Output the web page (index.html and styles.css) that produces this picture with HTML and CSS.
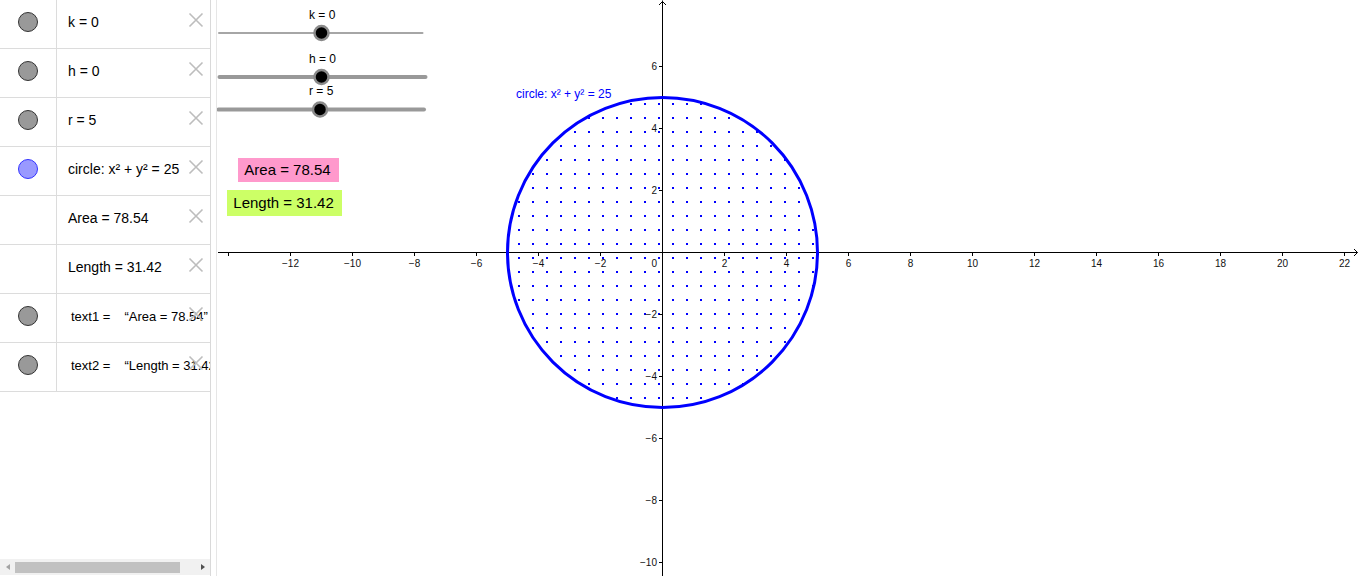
FILE: index.html
```html
<!DOCTYPE html>
<html>
<head>
<meta charset="utf-8">
<link rel="stylesheet" href="styles.css">
</head>
<body>
<div class="app">
  <aside class="algebra">
    <div class="rows">
      <div class="row">
        <div class="marble-cell"><span class="marble"></span></div>
        <div class="content">k = 0</div>
        <svg class="del" viewBox="0 0 16 16"><path d="M1.5 1.5L14.5 14.5M14.5 1.5L1.5 14.5"/></svg>
      </div>
      <div class="row">
        <div class="marble-cell"><span class="marble"></span></div>
        <div class="content">h = 0</div>
        <svg class="del" viewBox="0 0 16 16"><path d="M1.5 1.5L14.5 14.5M14.5 1.5L1.5 14.5"/></svg>
      </div>
      <div class="row">
        <div class="marble-cell"><span class="marble"></span></div>
        <div class="content">r = 5</div>
        <svg class="del" viewBox="0 0 16 16"><path d="M1.5 1.5L14.5 14.5M14.5 1.5L1.5 14.5"/></svg>
      </div>
      <div class="row">
        <div class="marble-cell"><span class="marble blue"></span></div>
        <div class="content">circle: x² + y² = 25</div>
        <svg class="del" viewBox="0 0 16 16"><path d="M1.5 1.5L14.5 14.5M14.5 1.5L1.5 14.5"/></svg>
      </div>
      <div class="row">
        <div class="marble-cell"></div>
        <div class="content">Area = 78.54</div>
        <svg class="del" viewBox="0 0 16 16"><path d="M1.5 1.5L14.5 14.5M14.5 1.5L1.5 14.5"/></svg>
      </div>
      <div class="row">
        <div class="marble-cell"></div>
        <div class="content">Length = 31.42</div>
        <svg class="del" viewBox="0 0 16 16"><path d="M1.5 1.5L14.5 14.5M14.5 1.5L1.5 14.5"/></svg>
      </div>
      <div class="row">
        <div class="marble-cell"><span class="marble"></span></div>
        <div class="content text"><span>text1 =</span><span class="val">“Area = 78.54”</span></div>
        <svg class="del" viewBox="0 0 16 16"><path d="M1.5 1.5L14.5 14.5M14.5 1.5L1.5 14.5"/></svg>
      </div>
      <div class="row">
        <div class="marble-cell"><span class="marble"></span></div>
        <div class="content text"><span>text2 =</span><span class="val">“Length = 31.42”</span></div>
        <svg class="del" viewBox="0 0 16 16"><path d="M1.5 1.5L14.5 14.5M14.5 1.5L1.5 14.5"/></svg>
      </div>
    </div>
    <div class="hscroll">
      <div class="sb-btn"><span class="arrow-left"></span></div>
      <div class="sb-track"><div class="sb-thumb"></div></div>
      <div class="sb-btn"><span class="arrow-right"></span></div>
    </div>
  </aside>
  <div class="splitter"></div>
  <main class="graphics">
    <div class="disk-fill"></div>
    <svg class="canvas" width="1143" height="576" viewBox="217 0 1143 576">
      <!-- axes -->
      <g class="axis">
        <line x1="218" y1="252.5" x2="1357.5" y2="252.5"/>
        <line x1="662.5" y1="0.5" x2="662.5" y2="576"/>
        <path class="arrow" d="M1354 249L1357.5 252.5L1354 256"/>
        <path class="arrow" d="M659 5L662.5 1.5L666 5"/>
        <path class="ticks" d="M228.5 252.5V256M290.5 252.5V256M352.5 252.5V256M414.5 252.5V256M476.5 252.5V256M538.5 252.5V256M600.5 252.5V256M724.5 252.5V256M786.5 252.5V256M848.5 252.5V256M910.5 252.5V256M972.5 252.5V256M1034.5 252.5V256M1096.5 252.5V256M1158.5 252.5V256M1220.5 252.5V256M1282.5 252.5V256M1344.5 252.5V256M659 66.5H662.5M659 128.5H662.5M659 190.5H662.5M659 314.5H662.5M659 376.5H662.5M659 438.5H662.5M659 500.5H662.5M659 562.5H662.5"/>
      </g>
      <g class="xlabels">
        <text x="290.5" y="266.5">−12</text>
        <text x="352.5" y="266.5">−10</text>
        <text x="414.5" y="266.5">−8</text>
        <text x="476.5" y="266.5">−6</text>
        <text x="538.5" y="266.5">−4</text>
        <text x="600.5" y="266.5">−2</text>
        <text x="724.5" y="266.5">2</text>
        <text x="786.5" y="266.5">4</text>
        <text x="848.5" y="266.5">6</text>
        <text x="910.5" y="266.5">8</text>
        <text x="972.5" y="266.5">10</text>
        <text x="1034.5" y="266.5">12</text>
        <text x="1096.5" y="266.5">14</text>
        <text x="1158.5" y="266.5">16</text>
        <text x="1220.5" y="266.5">18</text>
        <text x="1282.5" y="266.5">20</text>
        <text x="1344.5" y="266.5">22</text>
      </g>
      <g class="ylabels">
        <text x="657" y="266.5">0</text>
        <text x="657" y="70">6</text>
        <text x="657" y="132">4</text>
        <text x="657" y="194">2</text>
        <text x="657" y="318">−2</text>
        <text x="657" y="380">−4</text>
        <text x="657" y="442">−6</text>
        <text x="657" y="504">−8</text>
        <text x="657" y="566">−10</text>
      </g>

      <!-- circle outline -->
      <circle class="circ" cx="662.5" cy="252.5" r="155"/>
      <text class="circ-label" x="516" y="98">circle: x² + y² = 25</text>

      <!-- sliders -->
      <g class="slider">
        <text x="309" y="19">k = 0</text>
        <line class="track thin" x1="219" y1="33" x2="422.5" y2="33"/>
        <circle class="knob" cx="321.5" cy="33" r="7"/>
      </g>
      <g class="slider">
        <text x="309" y="62.5">h = 0</text>
        <line class="track" x1="219.5" y1="77" x2="425.5" y2="77"/>
        <circle class="knob" cx="321.5" cy="77" r="7"/>
      </g>
      <g class="slider">
        <text x="309" y="95">r = 5</text>
        <line class="track" x1="218.5" y1="109.5" x2="424" y2="109.5"/>
        <circle class="knob" cx="320" cy="109.5" r="7"/>
      </g>

      <!-- text boxes -->
      <rect x="238" y="158" width="101" height="24" fill="#ff99cc"/>
      <text class="box-text" x="244.3" y="175">Area = 78.54</text>
      <rect x="227" y="190" width="115" height="26" fill="#ccff66"/>
      <text class="box-text" x="233.3" y="207.5">Length = 31.42</text>
    </svg>
  </main>
</div>
</body>
</html>
```

FILE: styles.css
```css
html, body {
  margin: 0;
  padding: 0;
  background: #ffffff;
}

body {
  font-family: "Liberation Sans", Arial, sans-serif;
  color: #000;
  overflow: hidden;
}

.app {
  display: flex;
  width: 1360px;
  height: 576px;
}

/* ---------- Algebra view ---------- */
.algebra {
  width: 211px;
  flex-shrink: 0;
  box-sizing: border-box;
  border-right: 1px solid #d9d9d9;
  display: flex;
  flex-direction: column;
}

.rows {
  flex: 1;
}

.row {
  position: relative;
  display: flex;
  height: 49px;
  box-sizing: border-box;
  border-bottom: 1px solid #dcdcdc;
  overflow: hidden;
}

.marble-cell {
  width: 57px;
  flex-shrink: 0;
  box-sizing: border-box;
  border-right: 1px solid #dcdcdc;
  display: flex;
  justify-content: center;
  align-items: flex-start;
  padding-top: 12px;
}

.marble {
  width: 20px;
  height: 20px;
  box-sizing: border-box;
  border-radius: 50%;
  border: 1px solid #333333;
  background: #999999;
}

.marble.blue {
  background: #9999ff;
  border-color: #3333ff;
}

.content {
  padding: 12px 0 0 11px;
  font-size: 14px;
  line-height: 20px;
  white-space: nowrap;
}

.content.text {
  font-size: 13px;
  padding-left: 14px;
  padding-top: 13px;
}

.content .val {
  margin-left: 14px;
}

.del {
  position: absolute;
  right: 6px;
  top: 12px;
  width: 16px;
  height: 16px;
  fill: none;
  stroke: #bdbdbd;
  stroke-width: 1.6;
}

/* scrollbar */
.hscroll {
  height: 16px;
  margin-bottom: 1px;
  background: #f1f1f1;
  display: flex;
  align-items: center;
}

.sb-btn {
  width: 15px;
  height: 100%;
  display: flex;
  justify-content: center;
  align-items: center;
}

.arrow-left {
  width: 0;
  height: 0;
  border-top: 3.5px solid transparent;
  border-bottom: 3.5px solid transparent;
  border-right: 4px solid #a3a3a3;
}

.arrow-right {
  width: 0;
  height: 0;
  border-top: 3.5px solid transparent;
  border-bottom: 3.5px solid transparent;
  border-left: 4px solid #505050;
}

.sb-track {
  flex: 1;
  height: 100%;
  display: flex;
  align-items: center;
}

.sb-thumb {
  width: 165px;
  height: 11px;
  background: #c1c1c1;
}

/* ---------- splitter ---------- */
.splitter {
  width: 5px;
  flex-shrink: 0;
  background: #ffffff;
}

/* ---------- Graphics view ---------- */
.graphics {
  position: relative;
  flex: 1;
  border-left: 1px solid #e6e6e6;
  overflow: hidden;
}

/* dotted fill of the circle (canvas item) */
.disk-fill {
  position: absolute;
  left: 290px;
  top: 97px;
  width: 311px;
  height: 311px;
  border-radius: 50%;
  background-image: conic-gradient(from 270deg at 2px 2px, #0000ff 90deg, transparent 0);
  background-size: 14px 14px;
  background-position: 11px 6px;
  z-index: 0;
}

.canvas {
  position: relative;
  z-index: 1;
  display: block;
  font-family: "Liberation Sans", Arial, sans-serif;
}

.axis line,
.axis .ticks {
  stroke: #000;
  stroke-width: 1;
  fill: none;
}

.axis .arrow {
  stroke: #000;
  stroke-width: 1;
  fill: none;
}

.xlabels text {
  font-size: 10px;
  text-anchor: middle;
  fill: #111;
}

.ylabels text {
  font-size: 10px;
  text-anchor: end;
  fill: #111;
}

.circ {
  fill: none;
  stroke: #0000ff;
  stroke-width: 3;
}

.circ-label {
  font-size: 12px;
  fill: #0000ff;
}

.slider text {
  font-size: 12px;
  fill: #000;
}

.track {
  stroke: #999999;
  stroke-width: 4;
  stroke-linecap: round;
}

.track.thin {
  stroke: #a6a6a6;
  stroke-width: 2;
}

.knob {
  fill: #000;
  stroke: #8a8a8a;
  stroke-width: 2.5;
}

.box-text {
  font-size: 15px;
  fill: #000;
}
```
